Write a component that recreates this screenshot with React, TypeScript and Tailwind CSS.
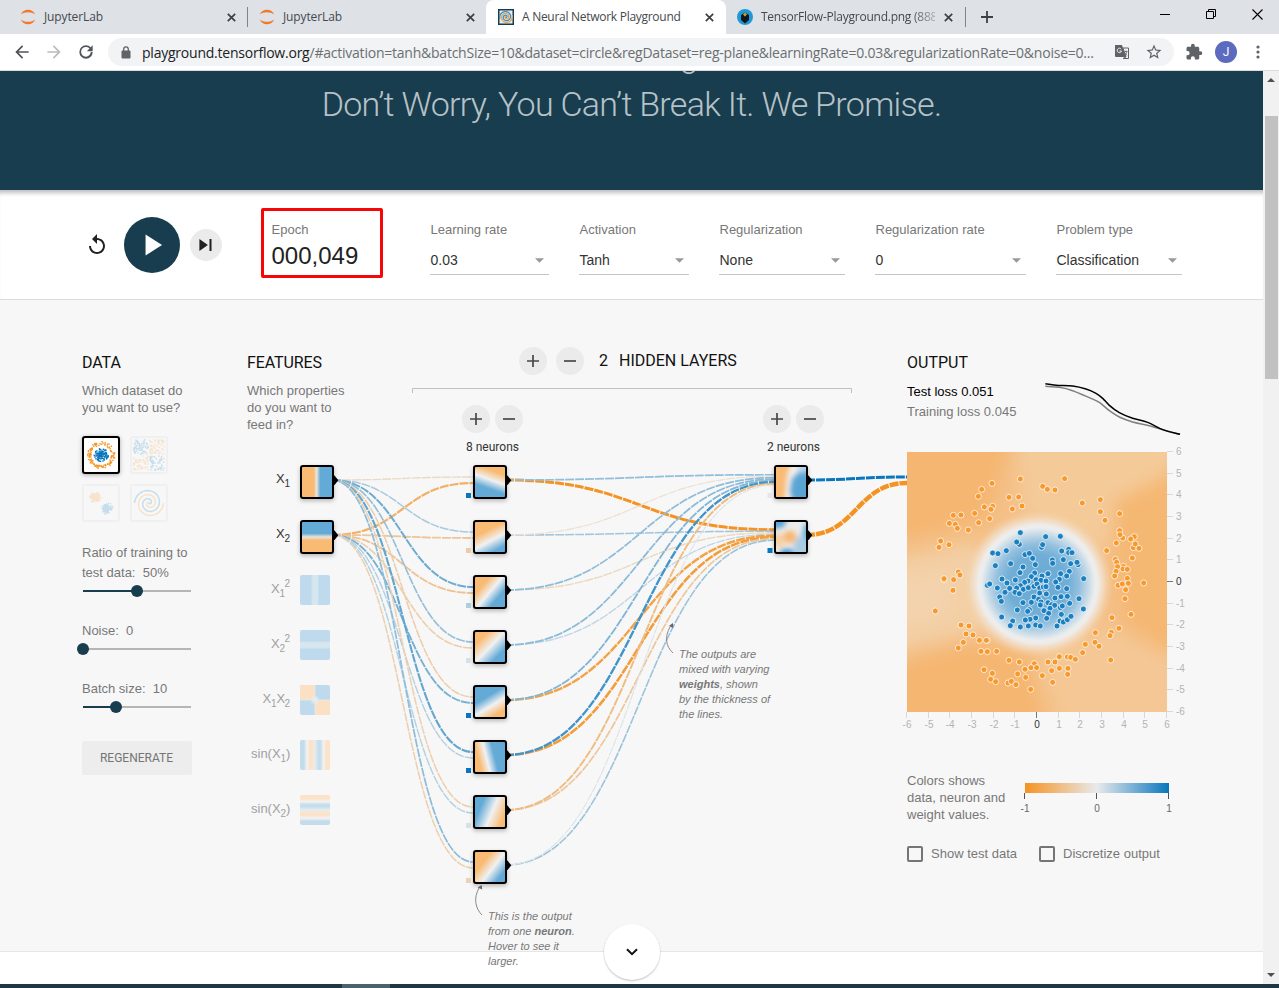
import React from "react";

type Pt = [number, number];
const ARIAL = "font-['Liberation_Sans',Arial,sans-serif]";
const ROBOTO = "font-[Roboto,sans-serif]";
const SEGOE = "font-['Open_Sans','Noto_Sans',sans-serif]";

const ORANGE = "#f59322";
const BLUE = "#0877bd";
const SOFT_ORANGE = "#f9bb74";
const SOFT_BLUE = "#64aad6";
const SOFT_WHITE = "#f0f1f2";

const PATH =
  "/#activation=tanh&batchSize=10&dataset=circle&regDataset=reg-plane&learningRate=0.03&regularizationRate=0&noise=0...";

function mix(w: number) {
  const t = Math.min(1, Math.abs(w));
  const a = [232, 234, 235];
  const b = w < 0 ? [245, 147, 34] : [8, 119, 189];
  return `rgb(${a.map((v, i) => Math.round(v + (b[i] - v) * t)).join(",")})`;
}

function rng(seed: number) {
  let s = seed;
  return () => {
    s = (s * 16807) % 2147483647;
    return s / 2147483647;
  };
}

function smooth(p: Pt[]) {
  let d = `M${p[0][0]} ${p[0][1]}`;
  for (let i = 0; i < p.length - 1; i++) {
    const a = p[Math.max(0, i - 1)], b = p[i], c = p[i + 1], e = p[Math.min(p.length - 1, i + 2)];
    d += `C${b[0] + (c[0] - a[0]) / 6} ${b[1] + (c[1] - a[1]) / 6} ${c[0] - (e[0] - b[0]) / 6} ${c[1] - (e[1] - b[1]) / 6} ${c[0]} ${c[1]}`;
  }
  return d;
}

/* ---------- browser chrome ---------- */

function Close() {
  return (
    <svg width="9" height="9" viewBox="0 0 9 9" className="shrink-0">
      <path d="M.8.8l7.4 7.4M8.2.8L.8 8.2" stroke="#3c4043" strokeWidth="1.7" />
    </svg>
  );
}

function Jupyter() {
  return (
    <svg width="16" height="16" viewBox="0 0 16 16" className="shrink-0">
      <path d="M.8 5.6C2 2.400 4.800.8 8 .8s6 1.600 7.200 4.800C13.200 4 10.800 3.200 8 3.200S2.800 4 .8 5.600z" fill="#f37726" />
      <path d="M.8 10.400C2 13.600 4.800 15.200 8 15.200s6-1.600 7.200-4.800c-2 1.600-4.400 2.400-7.200 2.400S2.800 12 .8 10.400z" fill="#f37726" />
    </svg>
  );
}

function spiralPath(cx: number, cy: number, turns: number, r: number, phase: number) {
  let d = "";
  for (let i = 0; i <= 60; i++) {
    const t = i / 60;
    const a = t * turns * Math.PI * 2 + phase;
    d += `${i ? "L" : "M"}${(cx + Math.sin(a) * r * t).toFixed(2)} ${(cy + Math.cos(a) * r * t).toFixed(2)}`;
  }
  return d;
}

function TabStrip() {
  return (
    <div className={`flex h-[34px] bg-[#dee1e6] text-[12px] text-[#45494d] ${SEGOE}`}>
      <div className="flex w-[248px] items-center pl-5">
        <Jupyter />
        <span className="ml-2 flex-1 tracking-[-0.12px]">JupyterLab</span>
        <Close />
        <span className="ml-[11px] h-5 w-px bg-[#808488]" />
      </div>
      <div className="flex w-[238px] items-center pl-[11px]">
        <Jupyter />
        <span className="ml-2 flex-1 tracking-[-0.12px]">JupyterLab</span>
        <Close />
        <span className="w-[11px]" />
      </div>
      <div className="flex w-[240px] items-center rounded-t-lg bg-white pl-3 pr-[12px]">
        <svg width="16" height="16" viewBox="0 0 16 16" className="shrink-0">
          <rect width="16" height="16" fill="#183d4e" />
          <rect x="1.500" y="1.500" width="13" height="13" fill="#e4edf2" />
          <path d={spiralPath(8, 8, 1.8, 6.5, 0)} fill="none" stroke="#3f8fc6" strokeWidth="1.300" />
          <path d={spiralPath(8, 8, 1.8, 6.5, Math.PI)} fill="none" stroke="#e8a552" strokeWidth="1.300" />
        </svg>
        <span className="ml-2 flex-1 whitespace-nowrap tracking-[-0.28px]">A Neural Network Playground</span>
        <Close />
      </div>
      <div className="flex w-[240px] items-center pl-[11px]">
        <svg width="16" height="16" viewBox="0 0 16 16" className="shrink-0">
          <circle cx="8" cy="8" r="8" fill="#1f9ad6" />
          <path d="M4 6l4-2.500L12 6v5l-4 3.500L4 11z" fill="#10181c" />
          <path d="M6 5.500l2-2 2 2-2 2z" fill="#c8a33c" />
        </svg>
        <span className="ml-2 w-[174px] whitespace-nowrap tracking-[-0.24px] [mask-image:linear-gradient(to_right,black_86%,rgba(0,0,0,0.3))]">
          TensorFlow-Playground.png (888
        </span>
        <span className="ml-[9px]"><Close /></span>
        <span className="ml-[12px] h-5 w-px shrink-0 bg-[#808488]" />
      </div>
      <div className="flex flex-1 items-center justify-between pl-[15px] pr-4">
        <svg width="12" height="12" viewBox="0 0 12 12"><path d="M6 0v12M0 6h12" stroke="#3c4043" strokeWidth="1.800" /></svg>
        <div className="flex h-full items-start gap-9 pt-[9px] text-black">
          <svg width="10" height="11" viewBox="0 0 10 11"><path d="M0 5.500h10" stroke="currentColor" /></svg>
          <svg width="10" height="11" viewBox="0 0 10 11" fill="none" stroke="currentColor"><path d="M.5 2.500h7v7h-7zM2.500 2.500v-2h7v7h-2" /></svg>
          <svg width="11" height="11" viewBox="0 0 11 11"><path d="M.5.5l10 10M10.500.5l-10 10" stroke="currentColor" strokeWidth="1.100" /></svg>
        </div>
      </div>
    </div>
  );
}

function Toolbar() {
  return (
    <div className="flex h-[37px] items-center border-b border-[#d9dbde] bg-white pl-[12px] pr-[10px] text-[#5f6368]">
      <div className="flex w-[96px] shrink-0 gap-3">
        <svg width="20" height="20" viewBox="0 0 24 24" fill="#505357"><path d="M20 11H7.830l5.590-5.590L12 4l-8 8 8 8 1.410-1.410L7.830 13H20z" /></svg>
        <svg width="20" height="20" viewBox="0 0 24 24" fill="#babcbe"><path d="M12 4l-1.410 1.410L16.170 11H4v2h12.170l-5.580 5.590L12 20l8-8z" /></svg>
        <svg width="20" height="20" viewBox="0 0 24 24" fill="#505357"><path d="M17.650 6.350A7.960 7.960 0 0012 4a8 8 0 108 8h-2.300a5.800 5.800 0 11-5.700-6c1.660 0 3.140.690 4.220 1.780L13 11h7V4z" /></svg>
      </div>
      <div className="flex h-7 w-[1066px] shrink-0 items-center rounded-full bg-[#f1f3f4] pl-[13px]">
        <svg width="10" height="13" viewBox="0 0 10 13" className="shrink-0"><rect x=".5" y="4.500" width="9" height="8" rx="1" fill="#5f6368" /><path d="M2.700 5V3.200a2.300 2.300 0 014.600 0V5" fill="none" stroke="#5f6368" strokeWidth="1.300" /></svg>
        <div className={`ml-[11px] flex w-[972px] shrink-0 whitespace-nowrap text-[14px] tracking-[-0.23px] text-[#6b6f73] ${SEGOE}`}>
          <span className="text-[#202124]">playground.tensorflow.org</span>
          <span>{PATH}</span>
        </div>
        <svg width="16" height="16" viewBox="0 0 16 16" className="mr-[15px] shrink-0">
          <path d="M1 1h7l4 12H2a1 1 0 01-1-1z" fill="#5f6368" />
          <path d="M9 4h5.500v10.500H9l3-1.500z" fill="#f1f3f4" stroke="#5f6368" />
          <path d="M7.200 5.200A2.200 2.200 0 107.500 7H5.500" fill="none" stroke="#f1f3f4" />
          <path d="M10.500 7.500h3M12 6.500v1M13 7.500c-.3 1.500-1 2.500-2 3M11 8.500l2 3" stroke="#5f6368" strokeWidth=".8" fill="none" />
        </svg>
        <svg width="18" height="18" viewBox="0 0 24 24" fill="#5f6368" className="shrink-0"><path d="M22 9.240l-7.190-.620L12 2 9.190 8.630 2 9.240l5.460 4.730L5.820 21 12 17.270 18.180 21l-1.630-7.030zM12 15.400l-3.760 2.270 1-4.280-3.320-2.880 4.380-.380L12 6.100l1.710 4.040 4.380.380-3.320 2.880 1 4.280z" /></svg>
      </div>
      <svg width="18" height="18" viewBox="0 0 24 24" fill="#5f6368" className="ml-[11px] shrink-0"><path d="M20.500 11H19V7c0-1.100-.9-2-2-2h-4V3.500a2.500 2.500 0 00-5 0V5H4c-1.100 0-1.990.9-1.990 2v3.800H3.500a2.700 2.700 0 010 5.400H2V20c0 1.100.9 2 2 2h3.800v-1.500a2.700 2.700 0 015.400 0V22H17c1.100 0 2-.9 2-2v-4h1.500a2.500 2.500 0 000-5z" /></svg>
      <div className={`ml-[12px] flex size-[22px] shrink-0 items-center justify-center rounded-full bg-[#5c6bc0] text-[12px] text-white ${ROBOTO}`}>J</div>
      <svg width="4" height="16" viewBox="0 0 4 16" fill="#5f6368" className="ml-[19px] shrink-0"><circle cx="2" cy="3" r="1.600" /><circle cx="2" cy="8" r="1.600" /><circle cx="2" cy="13" r="1.600" /></svg>
    </div>
  );
}

function Scrollbar() {
  return (
    <div className="flex w-4 flex-col items-center bg-[#f1f1f1]">
      <svg width="8" height="4" viewBox="0 0 8 4" className="mt-[7px]"><path d="M0 4l4-4 4 4z" fill="#505050" /></svg>
      <div className="mt-[34px] h-[263px] w-[13px] bg-[#c1c1c1]" />
      <div className="flex-1" />
      <svg width="8" height="4" viewBox="0 0 8 4" className="mb-[7px]"><path d="M0 0l4 4 4-4z" fill="#505050" /></svg>
    </div>
  );
}

/* ---------- top controls ---------- */

const selects = [
  { label: "Learning rate", value: "0.03", w: "w-[119px]" },
  { label: "Activation", value: "Tanh", w: "w-[110px]" },
  { label: "Regularization", value: "None", w: "w-[126px]" },
  { label: "Regularization rate", value: "0", w: "w-[151px]" },
  { label: "Problem type", value: "Classification", w: "w-[126px]" },
];

function Controls() {
  return (
    <div className={`flex h-[110px] shrink-0 border-b border-[#dcdcdc] bg-white shadow-[inset_0_6px_4px_-3px_rgba(0,0,0,0.25)] ${ARIAL}`}>
      <div className="flex h-[110px] w-[261px] shrink-0 items-center pl-[85px]">
        <svg width="24" height="24" viewBox="0 0 24 24" fill="#212121"><path d="M12 5V1L7 6l5 5V7c3.310 0 6 2.690 6 6s-2.690 6-6 6-6-2.690-6-6H4c0 4.420 3.580 8 8 8s8-3.580 8-8-3.580-8-8-8z" /></svg>
        <div className="ml-[15px] flex size-14 items-center justify-center rounded-full bg-[#183d4e]">
          <svg width="36" height="36" viewBox="0 0 24 24" fill="#fff"><path d="M7.700 5v14l11-7z" /></svg>
        </div>
        <div className="ml-[10px] flex size-8 items-center justify-center rounded-full bg-[#ebebeb]">
          <svg width="24" height="24" viewBox="0 0 24 24" fill="#212121"><path d="M5.400 18l8.500-6-8.500-6v12zM15.500 6v12h2V6h-2z" /></svg>
        </div>
      </div>
      <div className="mt-[18px] h-[70px] w-[122px] shrink-0 rounded-[2px] border-[3px] border-[#f60606] pl-[7.5px] pt-[10px]">
        <div className="text-[13px] leading-[18px] text-[#777]">Epoch</div>
        <div className="mt-[2px] text-[24px] leading-[30px] text-[#222]">000,049</div>
      </div>
      <div className="ml-[47px] flex gap-[30px] pt-[30px]">
        {selects.map((s) => (
          <div key={s.label} className={`${s.w} flex h-[55px] flex-col border-b border-[#c6c6c6]`}>
            <div className="whitespace-nowrap pl-[0.500px] text-[13px] leading-5 text-[#777]">{s.label}</div>
            <div className="mt-[10px] flex items-center justify-between pl-[0.500px] pr-[5px] text-[14px] leading-5 text-[#333]">
              {s.value}
              <svg width="9" height="5" viewBox="0 0 9 5" className="mt-px"><path d="M0 .3h9L4.500 4.800z" fill="#999" /></svg>
            </div>
          </div>
        ))}
      </div>
    </div>
  );
}

/* ---------- dataset column ---------- */

function DatasetTile({ kind }: { kind: "circle" | "xor" | "gauss" | "spiral" }) {
  const rand = rng({ circle: 91, xor: 4517, gauss: 77031, spiral: 5 }[kind]);
  const dots: { x: number; y: number; c: string }[] = [];
  if (kind === "circle") {
    for (let i = 0; i < 110; i++) {
      const r = rand() * 7, a = rand() * 6.283;
      dots.push({ x: 16.5 + r * Math.cos(a), y: 16.5 + r * Math.sin(a), c: BLUE });
    }
    for (let i = 0; i < 115; i++) {
      const r = 10 + rand() * 3.6, a = rand() * 6.283;
      dots.push({ x: 16.5 + r * Math.cos(a), y: 16.5 + r * Math.sin(a), c: ORANGE });
    }
  } else if (kind === "xor") {
    for (let i = 0; i < 250; i++) {
      const x = rand() * 29 - 14.5, y = rand() * 29 - 14.5;
      dots.push({ x: 16.3 + x + Math.sign(x) * 0.9, y: 16.3 + y + Math.sign(y) * 0.9, c: x * y > 0 ? BLUE : ORANGE });
    }
  } else if (kind === "gauss") {
    for (let i = 0; i < 200; i++) {
      const r = (rand() + rand()) * 3.2, a = rand() * 6.283, o = i % 2 ? 5.6 : -5.6;
      dots.push({ x: 16.5 + o + r * Math.cos(a), y: 16.5 + o + r * Math.sin(a), c: i % 2 ? BLUE : ORANGE });
    }
  }
  const on = kind === "circle";
  return (
    <div className={on ? "size-[38px] rounded-[3px] border-2 border-black bg-white shadow-[0_1px_4px_rgba(0,0,0,0.3)]" : "size-[38px] rounded-[3px] border-2 border-[#f0f0f0]"}>
      <svg width="34" height="34" viewBox="0 0 34 34" className={on ? "" : "opacity-20"}>
        {dots.map((d, i) => <rect key={i} x={d.x} y={d.y} width="1.400" height="1.400" fill={d.c} />)}
        {kind === "spiral" && (
          <g fill="none" strokeWidth="1.500">
            <path d={spiralPath(17, 17, 1.75, 14.5, 0)} stroke={BLUE} />
            <path d={spiralPath(17, 17, 1.75, 14.5, Math.PI)} stroke={ORANGE} />
          </g>
        )}
      </svg>
    </div>
  );
}

function Slider({ at }: { at: number }) {
  return (
    <svg width="116" height="18" viewBox="-7 0 116 18" className="-ml-[6px] block">
      <path d="M0 9h108" stroke="#b5b5b5" strokeWidth="2" />
      <path d={`M0 9h${at}`} stroke="#183d4e" strokeWidth="2" />
      <circle cx={at} cy="9" r="6" fill="#183d4e" />
    </svg>
  );
}

function DataColumn() {
  return (
    <div className="w-[165px] pt-[53px]">
      <h4 className={`text-[16px] leading-5 tracking-[-0.1px] text-[#111] ${ROBOTO}`}>DATA</h4>
      <p className="mt-[9px] whitespace-nowrap text-[13px] leading-[17px]">Which dataset do<br />you want to use?</p>
      <div className="mt-5 grid w-[86px] grid-cols-2 gap-[10px]">
        <DatasetTile kind="circle" /><DatasetTile kind="xor" /><DatasetTile kind="gauss" /><DatasetTile kind="spiral" />
      </div>
      <p className="mt-[21px] whitespace-pre text-[13px] leading-5">Ratio of training to<br />test data:  50%</p>
      <div className="-mt-px"><Slider at={54} /></div>
      <p className="mt-[21px] whitespace-pre text-[13px] leading-5">Noise:  0</p>
      <div className="-mt-px"><Slider at={0} /></div>
      <p className="mt-[21px] whitespace-pre text-[13px] leading-5">Batch size:  10</p>
      <div className="-mt-px"><Slider at={33} /></div>
      <button className={`mt-[25px] h-[34px] w-[110px] rounded-[2px] bg-[#ededed] pr-px text-[12px] text-[#757575] ${ROBOTO}`}>REGENERATE</button>
    </div>
  );
}

/* ---------- network ---------- */

const rowY = [480, 535, 590, 645, 700, 755, 810, 865];
const inW = [[-0.2, -0.66], [0.28, -0.42], [0.55, -0.45], [0.37, -0.32], [-0.32, 0.5], [0.6, 0.23], [-0.3, 0.23], [0.4, -0.3]];
const outW = [
  [0.38, -0.12, 0.4, 0.42, 0.46, 0.75, -0.52, 0.06],
  [-1.1, 0.32, -0.22, 0.18, -0.82, -0.88, -0.4, 0.34],
];
const hidden = [
  { c: [0.5, 0.42], d: [-0.35, 1], h: 0.3, bias: 1 },
  { c: [0.5, 0.64], d: [0.52, 1], h: 0.36, bias: -0.35 },
  { c: [0.48, 0.52], d: [0.8, 0.68], h: 0.33, bias: 0.25 },
  { c: [0.5, 0.5], d: [0.72, 0.7], h: 0.4, bias: 0.08 },
  { c: [0.5, 0.65], d: [-0.55, -0.9], h: 0.33, bias: 1 },
  { c: [0.38, 0.5], d: [1, -0.25], h: 0.27, bias: 1 },
  { c: [0.57, 0.5], d: [-1, -0.42], h: 0.42, bias: 0.08 },
  { c: [0.58, 0.55], d: [0.8, 0.62], h: 0.37, bias: -0.28 },
];

function Link({ x0, y0, x1, y1, w }: { x0: number; y0: number; x1: number; y1: number; w: number }) {
  const m = (x0 + x1) / 2;
  return <path d={`M${x0} ${y0}C${m} ${y0} ${m} ${y1} ${x1} ${y1}`} fill="none" stroke={mix(w)} strokeWidth={1 + Math.abs(w) * 1.8} strokeDasharray="9 1" />;
}

function Box({ x, y, children }: { x: number; y: number; children?: React.ReactNode }) {
  return (
    <g transform={`translate(${x} ${y})`}>
      <path d="M33 10.500h1.500l3.800 4.800-3.800 4.800H33z" fill="#000" />
      <rect width="34" height="34" rx="3" fill="#000" className="[filter:drop-shadow(0_2px_2px_rgba(0,0,0,0.25))]" />
      <g transform="translate(2 2)" clipPath="url(#inner)">{children}</g>
    </g>
  );
}

function FeatureLabel({ y, on, parts }: { y: number; on?: boolean; parts: [number, number, string, number][] }) {
  return (
    <g fill={on ? "#333" : "#a0a0a0"}>
      {parts.map(([x, dy, t, s], i) => <text key={i} x={x} y={y + dy} fontSize={s}>{t}</text>)}
    </g>
  );
}

function Network() {
  return (
    <svg className={`absolute inset-0 ${ARIAL}`} width="1263" height="684" viewBox="0 300 1263 684">
      <defs>
        <clipPath id="inner"><rect width="30" height="30" rx="1" /></clipPath>
        <filter id="soft" x="-50%" y="-50%" width="200%" height="200%"><feGaussianBlur stdDeviation="2.500" /></filter>
        <linearGradient id="fx1"><stop offset=".39" stopColor={SOFT_ORANGE} /><stop offset=".49" stopColor="#ebe4dc" /><stop offset=".61" stopColor={SOFT_BLUE} /></linearGradient>
        <linearGradient id="fx2" x2="0" y2="1"><stop offset=".38" stopColor={SOFT_BLUE} /><stop offset=".5" stopColor="#ebe4dc" /><stop offset=".61" stopColor={SOFT_ORANGE} /></linearGradient>
        <linearGradient id="sq1"><stop offset=".35" stopColor="#bfdaec" /><stop offset=".43" stopColor="#d7e7f0" /><stop offset=".57" stopColor="#d7e7f0" /><stop offset=".65" stopColor="#bfdaec" /></linearGradient>
        <linearGradient id="sin1">
          <stop offset=".13" stopColor="#c3dcec" /><stop offset=".23" stopColor="#f3f3f2" /><stop offset=".33" stopColor="#fbe2c9" /><stop offset=".43" stopColor="#fae5d0" />
          <stop offset=".5" stopColor="#e6ecee" /><stop offset=".62" stopColor="#c3dcec" /><stop offset=".69" stopColor="#c8dfed" /><stop offset=".78" stopColor="#f3f3f2" /><stop offset=".88" stopColor="#fbe2c9" />
        </linearGradient>
        {hidden.map((n, i) => {
          const l = Math.hypot(n.d[0], n.d[1]);
          const dx = (n.d[0] / l) * n.h * 30, dy = (n.d[1] / l) * n.h * 30;
          return (
            <linearGradient key={i} id={`h${i}`} gradientUnits="userSpaceOnUse" x1={n.c[0] * 30 - dx} y1={n.c[1] * 30 - dy} x2={n.c[0] * 30 + dx} y2={n.c[1] * 30 + dy}>
              <stop offset="0" stopColor={SOFT_ORANGE} /><stop offset=".5" stopColor={SOFT_WHITE} /><stop offset="1" stopColor={SOFT_BLUE} />
            </linearGradient>
          );
        })}
      </defs>

      <path d="M412.500 393v-4.500h439V393" fill="none" stroke="#c0c0c0" />

      {rowY.map((y, i) => inW[i].map((w, j) => (
        <Link key={`${i}-${j}`} x0={332} y0={rowY[j]} x1={473} y1={y + ((j - 0.5) / 2) * 12} w={w} />
      )))}
      {rowY.map((y, i) => [1, 0].map((j) => (
        <Link key={`o${i}-${j}`} x0={505} y0={y} x1={774} y1={rowY[j] + ((i - 3.5) / 8) * 12} w={outW[j][i]} />
      )))}
      <Link x0={806} y0={480} x1={907} y1={477} w={1.1} />
      <Link x0={806} y0={535} x1={907} y1={483} w={-1.9} />

      <Box x={300} y={465}><rect width="30" height="30" fill="url(#fx1)" /></Box>
      <Box x={300} y={520}><rect width="30" height="30" fill="url(#fx2)" /></Box>
      <rect x="300" y="575" width="30" height="30" rx="2" fill="url(#sq1)" />
      <rect x="300" y="630" width="30" height="30" rx="2" fill="url(#sq1)" transform="rotate(90 315 645)" />
      <g transform="translate(300 685)">
        <rect width="30" height="30" rx="2" fill="#bfdaec" />
        <path d="M2 0h13v15H0V2a2 2 0 012-2zM15 15h15v13a2 2 0 01-2 2H15z" fill="#fbe0c4" />
        <path d="M15 0v30M0 15h30" stroke="#e6ecee" strokeOpacity=".7" />
        <circle cx="15" cy="15" r="3.500" fill="#e6ecee" className="[filter:blur(1px)]" />
      </g>
      <rect x="300" y="740" width="30" height="30" rx="2" fill="url(#sin1)" />
      <rect x="300" y="795" width="30" height="30" rx="2" fill="url(#sin1)" transform="rotate(-90 315 810)" />

      <FeatureLabel on y={483} parts={[[276, 0, "X", 13], [284.500, 4, "1", 10]]} />
      <FeatureLabel on y={538} parts={[[276, 0, "X", 13], [284.500, 4, "2", 10]]} />
      <FeatureLabel y={593} parts={[[271, 0, "X", 13], [279.500, 4, "1", 10], [284.500, -6, "2", 10]]} />
      <FeatureLabel y={648} parts={[[271, 0, "X", 13], [279.500, 4, "2", 10], [284.500, -6, "2", 10]]} />
      <FeatureLabel y={703} parts={[[262.500, 0, "X", 13], [271, 4, "1", 10], [276.500, 0, "X", 13], [284.500, 4, "2", 10]]} />
      <FeatureLabel y={758} parts={[[251, 0, "sin(X", 13], [280.500, 4, "1", 10], [286, 0, ")", 13]]} />
      <FeatureLabel y={813} parts={[[251, 0, "sin(X", 13], [280.500, 4, "2", 10], [286, 0, ")", 13]]} />

      {hidden.map((n, i) => (
        <g key={i}>
          <Box x={473} y={rowY[i] - 15}><rect width="30" height="30" fill={`url(#h${i})`} /></Box>
          <rect x="466" y={rowY[i] + 13} width="5" height="5" fill={mix(n.bias)} />
        </g>
      ))}
      <Box x={774} y={465}>
        <rect width="30" height="30" fill="#f0eeec" />
        <g filter="url(#soft)">
          <path d="M-8-8h24L11 8 8 38H-8z" fill="#f9bb74" />
          <path d="M38-6L24 4l-8 8-2 12 4 16h22z" fill="#5aa4d4" />
          <path d="M38-8h-12l-6 8 6 6 12-4z" fill="#b9d6e8" />
        </g>
      </Box>
      <rect x="767.500" y="493" width="5" height="5" fill="#e3e5e6" />
      <Box x={774} y={520}>
        <rect width="30" height="30" fill="#ecebea" />
        <g filter="url(#soft)">
          <path d="M-6-6h18L8 5-6 8z" fill="#5aa4d4" />
          <path d="M36 2l-8 2-4 10-6 6v14h18z" fill="#a9cce4" />
          <path d="M28 2h12v20l-12-6z" fill="#62a8d7" />
          <path d="M6 27h10l3 8H2z" fill="#3f95cf" />
          <path d="M-6 12H8v13H-6z" fill="#f6cfa2" />
          <circle cx="14" cy="15" r="6.500" fill="#f8b871" />
        </g>
      </Box>
      <rect x="767.500" y="548" width="5" height="5" fill={BLUE} />

      <g fill="none" stroke="#8a8a8a">
        <path d="M482 915c-7-7-8.500-17-3-27" /><path d="M673 653c-7.500-7-8.500-16-3-26" />
      </g>
      <path d="M481.700 885l.5 4.500-4.500-2zM673 623l.3 5-4.500-2z" fill="#666" />
    </svg>
  );
}

function Round({ sign }: { sign: "+" | "-" }) {
  return (
    <span className="flex size-7 items-center justify-center rounded-full bg-[#ebebeb]">
      <svg width="12" height="12" viewBox="0 0 12 12"><path d={sign === "+" ? "M0 6h12M6 0v12" : "M0 6h12"} stroke="#484848" strokeWidth="1.700" /></svg>
    </span>
  );
}

function LayerHead({ n }: { n: number }) {
  return (
    <div className="flex w-[60px] flex-col items-center">
      <div className="flex gap-[5px]"><Round sign="+" /><Round sign="-" /></div>
      <div className={`mt-1 whitespace-nowrap pl-px text-[12px] leading-5 text-[#333] ${ROBOTO}`}>{n} neurons</div>
    </div>
  );
}

function HiddenColumn() {
  return (
    <div className="w-[495px] pt-[47px]">
      <div className="flex items-center pl-[107px]">
        <Round sign="+" /><span className="w-[9px]" /><Round sign="-" />
        <span className={`ml-[15px] text-[16px] text-[#111] ${ROBOTO}`}>2</span>
        <span className={`ml-[11px] text-[16px] text-[#111] ${ROBOTO}`}>HIDDEN LAYERS</span>
      </div>
      <div className="mt-[30px] flex gap-[241px] pl-[50px]">
        <LayerHead n={8} /><LayerHead n={2} />
      </div>
    </div>
  );
}

/* ---------- output ---------- */

const orangeDots: Pt[] = [
  [156, 70], [241, 57], [374, 56], [308, 79], [322, 88], [345, 90], [125, 88], [115, 109], [207, 112], [236, 111], [481, 119], [427, 129],
  [133, 141], [158, 139], [153, 148], [246, 138], [217, 147], [104, 160], [40, 166], [63, 165], [481, 155], [539, 161], [495, 181], [149, 176],
  [116, 188], [28, 190], [46, 193], [52, 205], [85, 210], [539, 212], [548, 234], [540, 224], [583, 230], [572, 237], [529, 249], [580, 263],
  [586, 252], [597, 265], [2, 243], [-3, 262], [27, 254], [500, 272], [577, 294], [526, 298], [530, 307], [533, 320], [550, 319], [528, 334],
  [549, 327], [562, 328], [524, 348], [562, 355], [611, 369], [534, 376], [547, 372], [565, 370], [557, 389], [555, 416], [55, 336], [60, 345],
  [12, 360], [12, 356], [41, 359], [39, 391], [-14, 453], [573, 463], [516, 473], [63, 495], [87, 498], [537, 505], [466, 518], [514, 517],
  [510, 527], [78, 522], [99, 525], [118, 541], [142, 541], [139, 541], [70, 547], [55, 564], [436, 553], [465, 547], [477, 559], [123, 574],
  [142, 575], [170, 574], [428, 578], [358, 590], [382, 591], [392, 592], [406, 598], [512, 600], [207, 601], [238, 606], [324, 606], [345, 606],
  [283, 611], [273, 623], [290, 623], [255, 628], [132, 629], [335, 632], [358, 625], [384, 625], [157, 640], [233, 642], [383, 643], [307, 647],
  [257, 652], [152, 658], [167, 665], [204, 669], [214, 664], [228, 674], [338, 667], [272, 688],
];
const blueDots: Pt[] = [
  [241, 218], [317, 230], [361, 229], [238, 253], [230, 246], [305, 262], [308, 254], [158, 279], [174, 281], [199, 272], [386, 268], [386, 278],
  [396, 278], [365, 273], [255, 284], [268, 280], [278, 295], [212, 311], [166, 317], [249, 321], [286, 314], [337, 300], [338, 310], [370, 299],
  [392, 311], [414, 314], [411, 307], [240, 338], [284, 339], [274, 350], [306, 348], [324, 341], [362, 341], [388, 334], [380, 348], [186, 357],
  [201, 369], [226, 360], [264, 363], [254, 367], [288, 359], [303, 361], [318, 363], [358, 358], [347, 366], [431, 356], [142, 376], [149, 372],
  [172, 384], [209, 385], [241, 377], [230, 384], [250, 388], [265, 383], [282, 379], [291, 372], [299, 384], [310, 381], [318, 380], [354, 382],
  [380, 386], [195, 397], [225, 397], [238, 401], [179, 411], [184, 424], [299, 399], [319, 402], [282, 411], [296, 418], [345, 414], [363, 410],
  [382, 409], [417, 416], [249, 428], [274, 427], [303, 426], [301, 435], [324, 428], [335, 434], [344, 436], [389, 430], [232, 450], [268, 449],
  [263, 454], [330, 445], [312, 452], [326, 460], [361, 443], [367, 438], [430, 447], [185, 471], [364, 463], [320, 475], [287, 474], [270, 478],
  [256, 480], [218, 483], [211, 497], [241, 501], [265, 498], [287, 495], [301, 498], [351, 498], [360, 483], [370, 486], [382, 479], [393, 469],
];
const testLoss: Pt[] = [[468, 132], [500, 137], [550, 139], [590, 148], [620, 161], [640, 176], [660, 197], [690, 219], [730, 236], [775, 248], [820, 270], [872, 284]];
const trainLoss: Pt[] = [[468, 140], [510, 143], [550, 153], [600, 174], [630, 188], [660, 213], [690, 232], [730, 247], [780, 258], [830, 273], [872, 284]];
const ticks = [-6, -5, -4, -3, -2, -1, 0, 1, 2, 3, 4, 5, 6];

function Plot() {
  return (
    <svg width="300" height="290" viewBox="0 0 300 290" className={`block overflow-visible ${ARIAL}`}>
      <defs>
        <clipPath id="area"><rect width="260" height="260" /></clipPath>
        <filter id="haze" x="-40%" y="-40%" width="180%" height="180%"><feGaussianBlur stdDeviation="8" /></filter>
        <radialGradient id="disc">
          <stop offset="0" stopColor="#69a9d4" /><stop offset=".4" stopColor="#70aed6" /><stop offset=".55" stopColor="#93c0de" />
          <stop offset=".67" stopColor="#c4d9e7" /><stop offset=".76" stopColor="#ebedee" /><stop offset=".8" stopColor="#efecea" /><stop offset=".88" stopColor="#f2dfca" stopOpacity=".75" /><stop offset="1" stopColor="#f3cfa4" stopOpacity="0" />
        </radialGradient>
      </defs>
      <g clipPath="url(#area)">
        <rect width="260" height="260" fill="#f4c087" />
        <g filter="url(#haze)">
          <path d="M-20-20h125L80 70-20 90z" fill="#f5b671" />
          <path d="M110-20h170v20l-65 60-20 40-80-40z" fill="#f4ca99" />
          <path d="M-20 110l90-20 20 85-110 25z" fill="#f3cfa5" />
          <path d="M-20 135l60-15v40l-60 20z" fill="#f3d3ae" />
          <path d="M-20 215l90-25 50 15 20 80H-20z" fill="#f5b671" />
          <path d="M205 50l70-35v195l-60-40z" fill="#f5b873" />
          <path d="M130 200l70-25 80 40v60h-125z" fill="#f4c794" />
        </g>
        <ellipse cx="131" cy="132" rx="75" ry="74" fill="url(#disc)" />
      </g>
      <g transform="translate(33 8) scale(.33333)" stroke="#fff" strokeOpacity=".75" strokeWidth="3">
        {orangeDots.map(([x, y], i) => <circle key={i} cx={x} cy={y} r="9" fill="#f7992c" />)}
        {blueDots.map(([x, y], i) => <circle key={i} cx={x} cy={y} r="9" fill="#1a80c1" />)}
      </g>
      <g fontSize="10" textAnchor="middle">
        {ticks.map((t) => {
          const p = Math.round(((t + 6) * 260) / 12);
          const c = t === 0 ? "#333" : "#b4b4b4", l = t === 0 ? "#777" : "#d8d8d8";
          return (
            <g key={t} fill={c}>
              <path d={`M${p - 0.5} 260v6M260 ${260 - p - 0.5}h6`} stroke={l} />
              <text x={p} y="276">{t}</text>
              <text x="269" y={260 - p + 3} textAnchor="start">{t}</text>
            </g>
          );
        })}
      </g>
    </svg>
  );
}

function OutputColumn() {
  return (
    <div className="w-[300px] pt-[53px]">
      <h4 className={`text-[16px] leading-5 text-[#111] ${ROBOTO}`}>OUTPUT</h4>
      <div className="flex h-[79px] justify-between pr-[26px]">
        <div className="whitespace-nowrap pt-[9px] text-[13px] leading-5">
          <div className="text-black">Test loss 0.051</div>
          <div className="text-[#777]">Training loss 0.045</div>
        </div>
        <svg width="136" height="64" viewBox="467 100 408 192" fill="none" className="shrink-0">
          <path d={smooth(trainLoss)} stroke="#808080" strokeWidth="4.500" />
          <path d={smooth(testLoss)} stroke="#000" strokeWidth="4.500" />
        </svg>
      </div>
      <Plot />
      <div className="mt-[30px] flex">
        <p className="w-[113px] whitespace-nowrap text-[13px] leading-[17px]">Colors shows<br />data, neuron and<br />weight values.</p>
        <svg width="156" height="40" viewBox="0 0 156 40" className={`overflow-visible ${ARIAL}`}>
          <defs><linearGradient id="legend"><stop stopColor="#f59322" /><stop offset=".5" stopColor="#e8eaeb" /><stop offset="1" stopColor="#0877bd" /></linearGradient></defs>
          <rect x="5" y="11" width="144" height="10" fill="url(#legend)" />
          <path d="M4.500 21v6M76.500 21v6M148.500 21v6" stroke="#555" />
          <g fontSize="10" fill="#666" textAnchor="middle"><text x="5" y="40">-1</text><text x="77" y="40">0</text><text x="149" y="40">1</text></g>
        </svg>
      </div>
      <div className="mt-[21px] flex items-center whitespace-nowrap text-[13px] leading-5">
        <span className="mr-2 size-4 rounded-[2px] border-2 border-[#757575]" />
        <span className="w-[108px]">Show test data</span>
        <span className="mr-2 size-4 rounded-[2px] border-2 border-[#757575]" />
        <span>Discretize output</span>
      </div>
    </div>
  );
}

export default function App() {
  return (
    <div className="flex h-[988px] w-[1279px] flex-col overflow-hidden bg-white">
      <TabStrip />
      <Toolbar />
      <div className="flex h-[913px] shrink-0">
        <div className="flex w-[1263px] flex-col overflow-hidden">
          <header className={`flex h-[119px] shrink-0 flex-col items-center overflow-hidden bg-[#183d4e] text-[34px] font-light leading-[50px] text-white/70 ${ROBOTO}`}>
            <div className="-mt-[41px] h-[49px] shrink-0 whitespace-nowrap tracking-[-0.7px]">Tinker With a <b className="font-medium">Neural Network</b> Right Here in Your Browser.</div>
            <div className="h-[50px] whitespace-nowrap tracking-[-0.7px]">Don’t Worry, You Can’t Break It. We Promise.</div>
          </header>
          <Controls />
          <main className={`relative flex h-[652px] shrink-0 border-b border-[#e6e6e6] bg-[#f7f7f7] pl-[82px] text-[#777] ${ARIAL}`}>
            <Network />
            <DataColumn />
            <div className="w-[165px] pt-[53px]">
              <h4 className={`text-[16px] leading-5 tracking-[-0.1px] text-[#111] ${ROBOTO}`}>FEATURES</h4>
              <p className="mt-[9px] whitespace-nowrap text-[13px] leading-[17px]">Which properties<br />do you want to<br />feed in?</p>
            </div>
            <HiddenColumn />
            <OutputColumn />
            <p className="absolute left-[679px] top-[347px] whitespace-nowrap text-[11px] italic leading-[15px]">
              The outputs are<br />mixed with varying<br /><b>weights</b>, shown<br />by the thickness of<br />the lines.
            </p>
            <p className="absolute left-[488px] top-[609px] z-10 whitespace-nowrap text-[11px] italic leading-[15px]">
              This is the output<br />from one <b>neuron</b>.<br />Hover to see it<br />larger.
            </p>
            <div className="absolute left-[604px] top-[624px] z-10 flex size-14 items-center justify-center rounded-full bg-white shadow-[0_1px_2px_rgba(0,0,0,0.25)]">
              <svg width="12" height="8" viewBox="0 0 12 8"><path d="M1 1.200l5 5 5-5" fill="none" stroke="#111" strokeWidth="2" /></svg>
            </div>
          </main>
        </div>
        <Scrollbar />
      </div>
      <div className="flex h-1 bg-[#1d3842] pl-[342px]"><div className="w-12 bg-[#4a626b]" /></div>
    </div>
  );
}
